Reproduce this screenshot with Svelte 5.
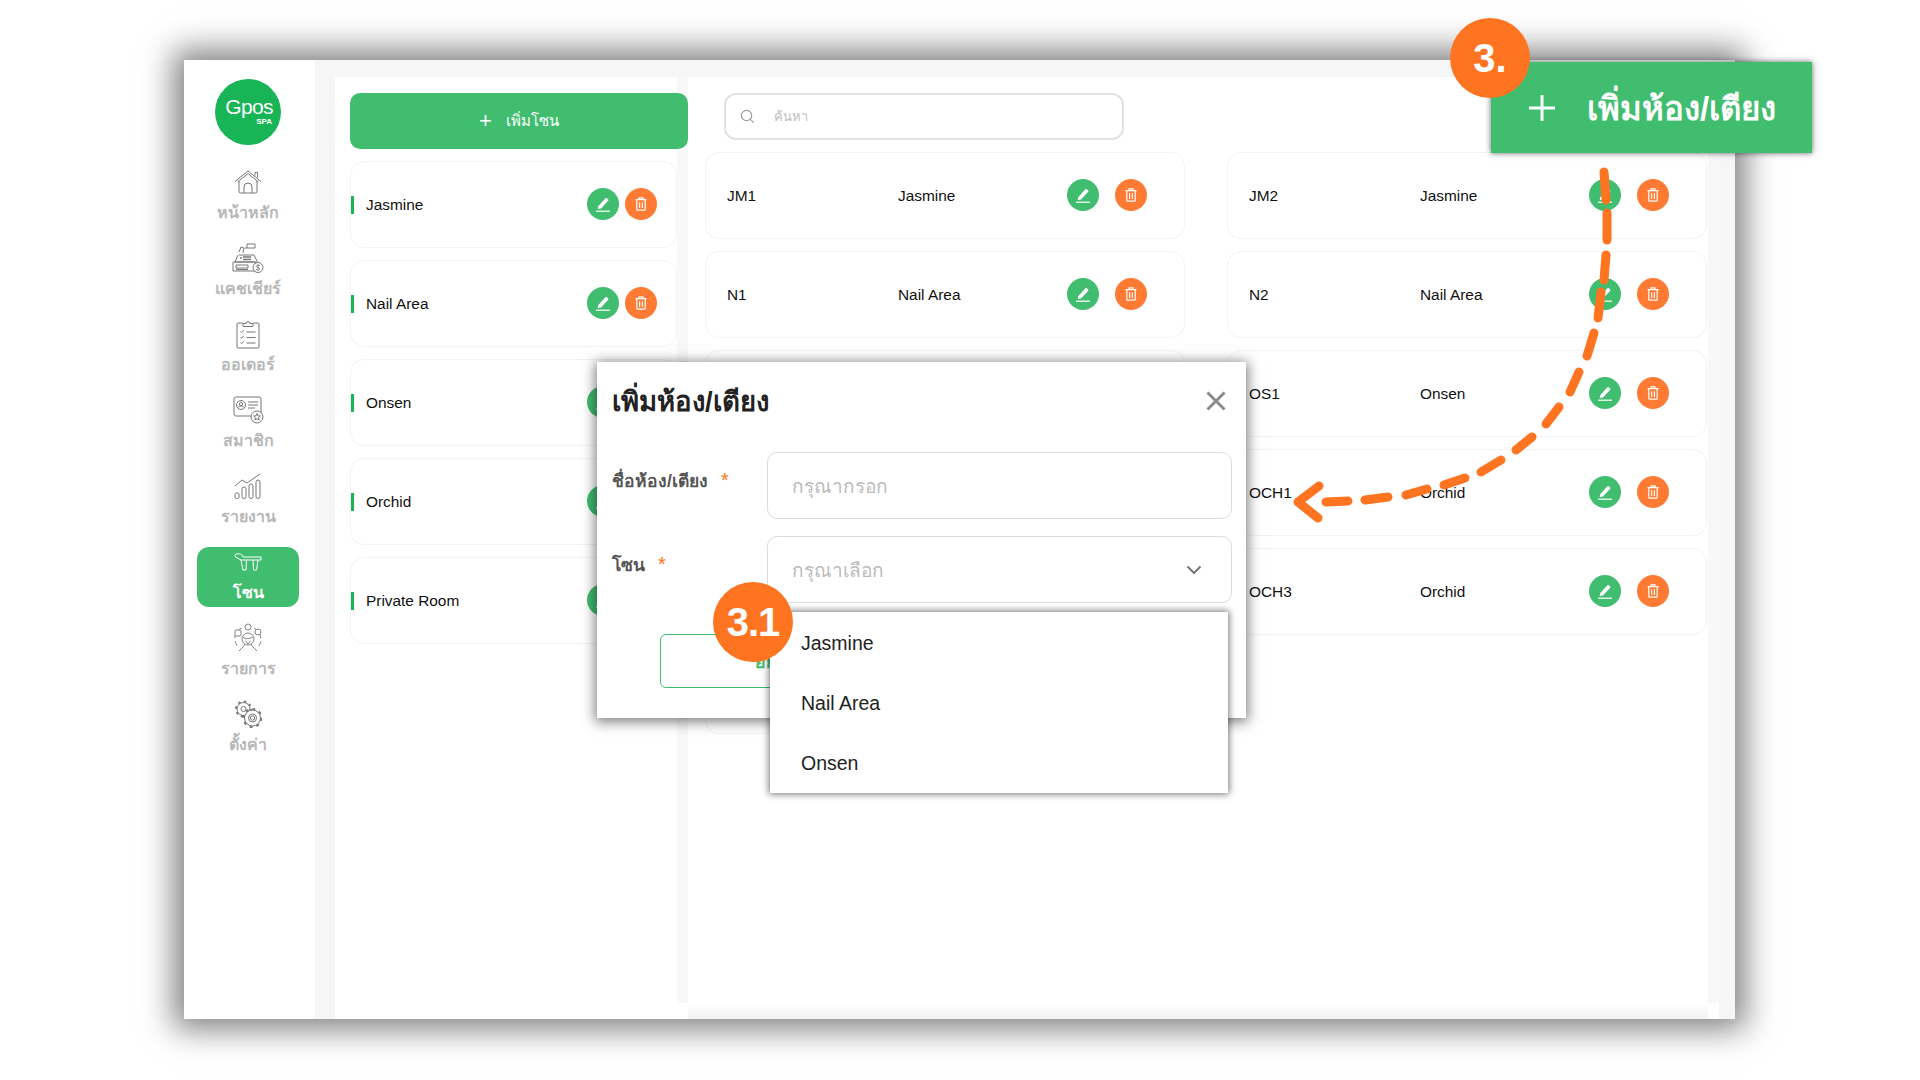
<script lang="ts">
  const navItems = [
    { key: 'home', label: 'หน้าหลัก' },
    { key: 'cashier', label: 'แคชเชียร์' },
    { key: 'order', label: 'ออเดอร์' },
    { key: 'member', label: 'สมาชิก' },
    { key: 'report', label: 'รายงาน' },
    { key: 'zone', label: 'โซน' },
    { key: 'service', label: 'รายการ' },
    { key: 'setting', label: 'ตั้งค่า' }
  ];

  const zones = ['Jasmine', 'Nail Area', 'Onsen', 'Orchid', 'Private Room'];

  // column by column, rows 3-6 on the left sit behind the modal
  const rooms = [
    { name: 'JM1', zone: 'Jasmine' },
    { name: 'JM2', zone: 'Jasmine' },
    { name: 'N1', zone: 'Nail Area' },
    { name: 'N2', zone: 'Nail Area' },
    { name: 'OS2', zone: 'Onsen' },
    { name: 'OS1', zone: 'Onsen' },
    { name: 'OCH2', zone: 'Orchid' },
    { name: 'OCH1', zone: 'Orchid' },
    { name: 'OCH4', zone: 'Orchid' },
    { name: 'OCH3', zone: 'Orchid' },
    { name: 'PR1', zone: 'Private Room' }
  ];

  const options = ['Jasmine', 'Nail Area', 'Onsen'];

  // dashes of the hand drawn arrow
  const dashes = [
    [1604, 172, 1606, 200], [1607, 213, 1607, 240], [1606, 255, 1604, 280],
    [1601, 292, 1598, 318], [1594, 333, 1587, 356], [1579, 372, 1570, 392],
    [1559, 407, 1546, 424], [1532, 437, 1516, 450], [1501, 460, 1481, 472],
    [1465, 478, 1444, 485], [1427, 489, 1406, 495], [1388, 497, 1365, 500],
    [1348, 501, 1326, 502]
  ];
</script>

{#snippet actions()}
  <span class="round edit">
    <svg viewBox="0 0 18 18" width="18" height="18" fill="none">
      <path d="M4.200 11.200 11.400 3.300a1 1 0 0 1 1.400-.1l1.300 1.200a1 1 0 0 1 .1 1.400L7 13.500l-3.300.5z" fill="#fff" />
      <path d="M2 16.200h14" stroke="#fff" stroke-width="1.200" />
    </svg>
  </span>
  <span class="round trash">
    <svg viewBox="0 0 16 16" width="16" height="16" fill="none" stroke="#fff" stroke-width="1.200">
      <path d="M2.500 3.600h11M6 3.400V1.900h4v1.500M3.800 3.800v9.400a1 1 0 0 0 1 1h6.400a1 1 0 0 0 1-1V3.800M6.600 6.200v5.800M9.400 6.200v5.800" />
    </svg>
  </span>
{/snippet}

<div class="page">
  <div class="window">
    <aside class="sidebar">
      <div class="logo">
        <span class="logo-name">Gpos</span>
        <span class="logo-sub">SPA</span>
      </div>

      <nav class="nav">
        {#each navItems as item}
          <div class="nav-item" class:active={item.key === 'zone'}>
            <span class="nav-icon">
              {#if item.key === 'home'}
                <svg viewBox="0 0 28 24" width="28" height="24" fill="none" stroke="#777" stroke-width="1">
                  <path d="M1 11.500 14 1l13 10.500M3.500 12 14 3.600 24.500 12M21 5.500V2.400h2.600v5.200" />
                  <path d="M5 11v11a1.500 1.500 0 0 0 1.500 1h15a1.500 1.500 0 0 0 1.500-1V11M10 23v-6a4 4 0 0 1 8 0v6" />
                </svg>
              {:else if item.key === 'cashier'}
                <svg viewBox="0 0 32 30" width="32" height="30" fill="none" stroke="#777" stroke-width="1">
                  <path d="M13 5h10V1h-8v4M7 9l2-5 3 1-1 5M7 12h15l3 6M6 12l-3 7h23" />
                  <path d="M11 14h8M11 16.500h8M8 15h2" stroke-width="1.500" />
                  <path d="M1 19h22v9H1z" />
                  <path d="M4 22h12v3H4zM4 26.500h12" />
                  <circle cx="26" cy="24.500" r="5" fill="#fff" />
                  <path d="M28 22.800c-1-1-4-.8-3.800.7.200 1.500 3.800.8 3.800 2.300 0 1.400-3 1.500-4 .500M26 21.200v6.600" stroke-width=".8" />
                </svg>
              {:else if item.key === 'order'}
                <svg viewBox="0 0 24 30" width="24" height="30" fill="none" stroke="#777" stroke-width="1">
                  <path d="M7 4H2a1 1 0 0 0-1 1v23a1 1 0 0 0 1 1h20a1 1 0 0 0 1-1V5a1 1 0 0 0-1-1h-5" />
                  <path d="M7 7V4.500h3a2 2 0 0 1 4 0h3V7a.500.500 0 0 1-.500.500h-9A.500.500 0 0 1 7 7z" />
                  <path d="m4.500 12.500 1.200 1.200 2-2.400M4.500 18 5.700 19.200l2-2.400M4.500 23.500l1.200 1.200 2-2.400M10.500 13h9M10.500 18.500h9M10.500 24h9" />
                </svg>
              {:else if item.key === 'member'}
                <svg viewBox="0 0 31 28" width="31" height="28" fill="none" stroke="#777" stroke-width="1">
                  <rect x="1" y="1" width="27" height="19" rx="2" />
                  <circle cx="8" cy="9" r="4.500" />
                  <circle cx="8" cy="8" r="1.600" />
                  <path d="M5 11.500c1-2 5-2 6 0M15 6h10M15 9h10M15 12h7" />
                  <circle cx="24" cy="21" r="6" fill="#fff" />
                  <path d="m24 17.500 1 2.300 2.400.200-1.800 1.600.6 2.400-2.200-1.300-2.200 1.300.6-2.400-1.800-1.600 2.400-.200z" />
                </svg>
              {:else if item.key === 'report'}
                <svg viewBox="0 0 28 28" width="28" height="28" fill="none" stroke="#777" stroke-width="1">
                  <path d="M1 14 8 8l5 3 13-9" />
                  <rect x="1" y="21" width="4" height="5.500" rx="1.500" />
                  <rect x="8" y="15" width="4" height="11.500" rx="2" />
                  <rect x="15" y="12" width="4" height="14.500" rx="2" />
                  <rect x="22" y="8" width="4" height="18.500" rx="2" />
                </svg>
              {:else if item.key === 'zone'}
                <svg viewBox="0 0 28 18" width="28" height="18" fill="none" stroke="#fff" stroke-width="1">
                  <path d="M1 2c0-1.500 6-1.500 7 0l1 2h18v3H7L1.500 4zM7 7l2 10h3l.5-10M19 7l.5 10h3l1.500-10" />
                </svg>
              {:else if item.key === 'service'}
                <svg viewBox="0 0 28 30" width="28" height="30" fill="none" stroke="#777" stroke-width=".9">
                  <circle cx="14" cy="16" r="6" />
                  <path d="M9 14c2 2 7 2 10 0M11 21l-2 3-4 4M17 21l2 3 4 4M11.500 18l2.500 3 2.500-3" />
                  <path d="M8 5a11 11 0 0 0-7 12c.3 3 2 6 4 8M20 5c4 2 7 6 7 12 0 3-2 6-4 8" stroke-dasharray="5 3" />
                  <circle cx="14" cy="4" r="3" />
                  <rect x="1" y="7" width="6" height="6" rx="1" fill="#fff" />
                  <circle cx="24" cy="9" r="3" fill="#fff" />
                </svg>
              {:else if item.key === 'setting'}
                <svg viewBox="0 0 28 28" width="28" height="28" fill="none" stroke="#777" stroke-width="1">
                  <circle cx="9.500" cy="9" r="6.500" />
                  <circle cx="9.500" cy="9" r="7.500" stroke-width="2" stroke-dasharray="2.500 3.400" />
                  <circle cx="9.500" cy="9" r="2.500" />
                  <circle cx="18.500" cy="18" r="8" fill="#fff" />
                  <circle cx="18.500" cy="18" r="9" stroke-width="2" stroke-dasharray="3 4" />
                  <circle cx="18.500" cy="18" r="4" />
                  <circle cx="18.500" cy="18" r="2.200" />
                </svg>
              {/if}
            </span>
            <span class="nav-label">{item.label}</span>
          </div>
        {/each}
      </nav>
    </aside>

    <main class="content">
      <div class="panel">
        <section class="zones">
          <button class="add-zone">
            <span class="add-plus">+</span>
            <span>เพิ่มโซน</span>
          </button>
          <div class="zone-list">
            {#each zones as zone}
              <div class="zone-card">
                <span class="zone-bar"></span>
                <span class="zone-name">{zone}</span>
                <span class="zone-actions">{@render actions()}</span>
              </div>
            {/each}
          </div>
        </section>

        <div class="track"></div>

        <section class="rooms">
          <div class="search">
            <svg viewBox="0 0 16 16" width="15" height="15" fill="none" stroke="#999" stroke-width="1.200">
              <circle cx="7" cy="7" r="5.500" />
              <path d="m11 11 3.500 3.500" />
            </svg>
            <span class="search-text">ค้นหา</span>
          </div>
          <div class="room-grid">
            {#each rooms as room}
              <div class="room-card">
                <span class="room-name">{room.name}</span>
                <span class="room-zone">{room.zone}</span>
                <span class="room-actions">{@render actions()}</span>
              </div>
            {/each}
          </div>
          <div class="bottom-fade"></div>
        </section>

        <div class="track"></div>
      </div>
    </main>
  </div>

  <div class="modal">
    <div class="modal-head">
      <h2 class="modal-title">เพิ่มห้อง/เตียง</h2>
      <svg class="close" viewBox="0 0 20 20" width="20" height="20" stroke="#8a8a8a" stroke-width="3" fill="none">
        <path d="m1.500 1.500 17 17M18.500 1.500l-17 17" />
      </svg>
    </div>
    <div class="form-row">
      <div class="form-label">ชื่อห้อง/เตียง<span class="star">*</span></div>
      <div class="field"><span class="placeholder">กรุณากรอก</span></div>
    </div>
    <div class="form-row">
      <div class="form-label">โซน<span class="star">*</span></div>
      <div class="field select">
        <span class="placeholder">กรุณาเลือก</span>
        <svg viewBox="0 0 16 10" width="16" height="10" fill="none" stroke="#777" stroke-width="2">
          <path d="m1.500 1.500 6.500 6.500 6.500-6.500" />
        </svg>
        <div class="dropdown">
          {#each options as option}
            <div class="option">{option}</div>
          {/each}
        </div>
      </div>
    </div>
    <button class="outline-btn">ยกเลิก</button>
  </div>

  <div class="callout">
    <svg viewBox="0 0 26 26" width="26" height="26" stroke="#fff" stroke-width="3">
      <path d="M13 0v26M0 13h26" />
    </svg>
    <span class="callout-text">เพิ่มห้อง/เตียง</span>
  </div>

  <div class="badge badge-main">3.</div>
  <div class="badge badge-sub">3.1</div>

  <svg class="arrow" viewBox="0 0 1920 1080" width="1920" height="1080" fill="none" stroke="#ff7420" stroke-width="9" stroke-linecap="round" stroke-linejoin="round">
    {#each dashes as d}
      <line x1={d[0]} y1={d[1]} x2={d[2]} y2={d[3]} />
    {/each}
    <path d="M1319 486 1298 502 1318 518" />
  </svg>
</div>

<style>
  :global(body) {
    margin: 0;
    background: #fff;
  }

  .page {
    position: relative;
    width: 1920px;
    height: 1080px;
    overflow: hidden;
    background: #fff;
    font-family: 'Liberation Sans', 'Noto Sans', sans-serif;
    color: #222;
  }

  .window {
    position: absolute;
    left: 184px;
    top: 60px;
    display: flex;
    width: 1551px;
    height: 959px;
    background: #f6f6f6;
    box-shadow: 0 0 30px 10px rgba(0, 0, 0, 0.5);
  }

  /* Sidebar */
  .sidebar {
    display: flex;
    flex-direction: column;
    align-items: center;
    width: 131px;
    padding-right: 3px;
    box-sizing: border-box;
    flex-shrink: 0;
    background: #fff;
  }

  .logo {
    display: flex;
    flex-direction: column;
    align-items: flex-end;
    justify-content: center;
    width: 66px;
    height: 66px;
    margin: 19px 0 22px;
    padding-right: 9px;
    box-sizing: border-box;
    border-radius: 50%;
    background: #18b557;
    color: #fff;
  }

  .logo-name {
    font-size: 21px;
    line-height: 20px;
    letter-spacing: -0.6px;
    margin-right: -1px;
  }

  .logo-sub {
    font-size: 8px;
    line-height: 10px;
    font-weight: 700;
  }

  .nav {
    display: flex;
    flex-direction: column;
    gap: 16px;
  }

  .nav-item {
    display: flex;
    flex-direction: column;
    align-items: center;
    width: 102px;
    height: 60px;
    border-radius: 12px;
  }

  .nav-item.active {
    background: #41bd70;
  }

  .nav-icon {
    display: flex;
    align-items: center;
    justify-content: center;
    height: 33px;
    padding-bottom: 3px;
    box-sizing: border-box;
  }

  .nav-label {
    font-size: 16px;
    line-height: 26px;
    font-weight: 700;
    color: #b8b8b8;
  }

  .nav-item.active .nav-label {
    color: #fff;
  }

  /* Content */
  .content {
    display: flex;
    flex: 1;
    min-width: 0;
    padding: 17px 16px 0 20px;
  }

  .panel {
    display: flex;
    flex: 1;
    min-width: 0;
    background: #fff;
  }

  .track {
    width: 11px;
    flex-shrink: 0;
    height: calc(100% - 16px);
    background: #f8f8f8;
  }

  .zones {
    width: 342px;
    flex-shrink: 0;
    padding: 16px 0 0 15px;
    box-sizing: border-box;
  }

  .add-zone {
    display: flex;
    align-items: center;
    justify-content: center;
    position: relative;
    width: 338px;
    height: 56px;
    margin-bottom: 12px;
    border: 0;
    border-radius: 10px;
    background: #41bd70;
    color: #fff;
    font-family: inherit;
    font-size: 15px;
  }

  .add-plus {
    margin-right: 14px;
    font-size: 22px;
    font-weight: 400;
  }

  .zone-list {
    display: flex;
    flex-direction: column;
    gap: 12px;
  }

  .zone-card {
    display: flex;
    align-items: center;
    height: 87px;
    padding-right: 19px;
    box-sizing: border-box;
    border: 1px solid #f3f3f3;
    border-radius: 14px;
    background: #fff;
  }

  .zone-bar {
    width: 3px;
    height: 18px;
    background: #18b557;
  }

  .zone-name {
    flex: 1;
    margin-left: 12px;
    font-size: 15.4px;
    color: #111;
  }

  .zone-actions {
    display: flex;
    gap: 6px;
    margin-top: -1px;
  }

  .round {
    display: flex;
    align-items: center;
    justify-content: center;
    width: 32px;
    height: 32px;
    border-radius: 50%;
  }

  .edit {
    background: #41bd70;
  }

  .trash {
    background: #ff7a33;
  }

  /* Rooms */
  .rooms {
    position: relative;
    flex: 1;
    min-width: 0;
    padding: 16px 0 0 17px;
  }

  .search {
    display: flex;
    align-items: center;
    width: 400px;
    height: 47px;
    margin: 0 0 12px 19px;
    padding-left: 14px;
    box-sizing: border-box;
    border: 2px solid #e2e2e2;
    border-radius: 12px;
    background: #fff;
  }

  .search-text {
    margin-left: 19px;
    font-size: 13px;
    color: #bdbdbd;
  }

  .room-grid {
    display: grid;
    grid-template-columns: 480px 480px;
    grid-auto-rows: 87px;
    gap: 12px 42px;
  }

  .room-card {
    display: flex;
    align-items: center;
    padding: 0 37.500px 0 21px;
    border: 1px solid #f3f3f3;
    border-radius: 14px;
    background: #fff;
    font-size: 15.4px;
    color: #111;
  }

  .room-name {
    width: 171px;
  }

  .room-zone {
    flex: 1;
  }

  .room-actions {
    display: flex;
    gap: 15.500px;
    margin-top: -2px;
  }

  .bottom-fade {
    position: absolute;
    left: 0;
    right: 0;
    bottom: 0;
    height: 16px;
    background: linear-gradient(#fff, #f3f3f3);
  }

  /* Modal */
  .modal {
    position: absolute;
    left: 597px;
    top: 362px;
    width: 649px;
    height: 356px;
    padding: 20px 14px 0 15px;
    box-sizing: border-box;
    background: #fff;
    box-shadow: 0 2px 12px 2px rgba(0, 0, 0, 0.5);
  }

  .modal-head {
    display: flex;
    align-items: center;
    justify-content: space-between;
    height: 38px;
    margin-bottom: 32px;
  }

  .modal-title {
    margin: 0;
    font-size: 27.500px;
    font-weight: 700;
    color: #222;
  }

  .close {
    margin-right: 6px;
  }

  .form-row {
    display: flex;
    height: 67px;
    margin-bottom: 17px;
  }

  .form-label {
    width: 155px;
    flex-shrink: 0;
    padding-top: 15px;
    font-size: 17.500px;
    line-height: 26px;
    font-weight: 700;
    color: #555;
  }

  .star {
    margin-left: 13px;
    font-size: 20px;
    font-weight: 400;
    color: #ff7420;
  }

  .field {
    position: relative;
    display: flex;
    align-items: center;
    justify-content: space-between;
    flex: 1;
    padding: 0 29px 0 24px;
    border: 1px solid #dcdcdc;
    border-radius: 10px;
  }

  .placeholder {
    font-size: 19px;
    color: #bbb;
  }

  .dropdown {
    position: absolute;
    left: 2px;
    top: 75px;
    display: flex;
    flex-direction: column;
    width: 458px;
    height: 181px;
    padding: 1px 0 0 31px;
    box-sizing: border-box;
    background: #fff;
    box-shadow: 0 0 7px 1px rgba(0, 0, 0, 0.55);
  }

  .option {
    display: flex;
    align-items: center;
    flex-shrink: 0;
    height: 60px;
    font-size: 19.500px;
    color: #222;
  }

  .outline-btn {
    display: block;
    width: 240px;
    height: 54px;
    margin: 31px 0 0 48px;
    padding-left: 6px;
    border: 1px solid #41bd70;
    border-radius: 6px;
    background: #fff;
    color: #41bd70;
    font-family: inherit;
    font-size: 18px;
    font-weight: 700;
  }

  /* Annotations */
  .callout {
    position: absolute;
    left: 1491px;
    top: 62px;
    display: flex;
    align-items: center;
    gap: 32px;
    width: 321px;
    height: 91px;
    padding-left: 38px;
    box-sizing: border-box;
    background: #41bd70;
    box-shadow: 0 0 6px rgba(0, 0, 0, 0.6);
    color: #fff;
    font-size: 33px;
    font-weight: 700;
  }

  .callout-text {
    margin-top: 2px;
  }

  .badge {
    position: absolute;
    display: flex;
    align-items: center;
    justify-content: center;
    width: 80px;
    height: 80px;
    border-radius: 50%;
    background: #ff7420;
    color: #fff;
    font-size: 40px;
    font-weight: 700;
  }

  .badge-main {
    left: 1450px;
    top: 18px;
  }

  .badge-sub {
    left: 713px;
    top: 582px;
    letter-spacing: -1px;
  }

  .arrow {
    position: absolute;
    left: 0;
    top: 0;
    pointer-events: none;
  }
</style>
